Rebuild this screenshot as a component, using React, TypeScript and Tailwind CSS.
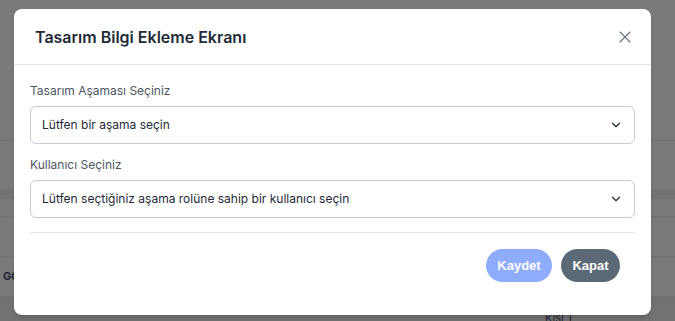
import { X, ChevronDown } from 'lucide-react';

function Select({ placeholder }: { placeholder: string }) {
  return (
    <div className="flex h-[38px] items-center justify-between rounded-md border border-[#c5ccd6] bg-white pl-[11px] pr-[11px]">
      <span className="text-[12px] text-[#1f2937] font-['Inter',sans-serif]">{placeholder}</span>
      <ChevronDown className="h-[14px] w-[14px] text-[#1f2937]" strokeWidth={2} />
    </div>
  );
}

export default function App() {
  return (
    <div className="relative h-[321px] w-full overflow-hidden bg-[#7a7a7a] font-['Inter',sans-serif]">
      {/* page under the overlay */}
      <div className="flex flex-col">
        <div className="h-[141px] border-b border-[#6f6f6f]" />
        <div className="h-[48px]" />
        <div className="h-[10px] bg-[#727272]" />
        <div className="h-[18px] border-b border-[#6f6f6f]" />
        <div className="h-[40px] border-b border-[#6f6f6f]" />
        <div className="flex h-[40px] items-center border-b border-[#6f6f6f] pl-[3px]">
          <span className="text-[11px] font-bold text-[#1e2430]">GÖ</span>
        </div>
        <div className="flex h-[24px] bg-[#727272] pl-[545px]">
          <span className="pt-[13px] text-[11px] text-[#1e2430]">Kişi T</span>
        </div>
      </div>

      {/* modal */}
      <div className="absolute left-[14px] top-[9px] flex h-[306px] w-[637px] flex-col rounded-lg bg-white shadow-md">
        <div className="flex h-[56px] items-center justify-between border-b border-[#e5e7eb] pl-[21px] pr-[16px]">
          <h2 className="text-[16px] font-semibold text-[#212a36]">Tasarım Bilgi Ekleme Ekranı</h2>
          <X className="h-[20px] w-[20px] text-[#6b7280]" strokeWidth={1.4} />
        </div>
        <div className="flex flex-col px-4 pt-[17px]">
          <label className="mb-[6px] text-[12px] text-[#4b5563]">Tasarım Aşaması Seçiniz</label>
          <Select placeholder="Lütfen bir aşama seçin" />
          <label className="mb-[6px] mt-[12px] text-[12px] text-[#4b5563]">Kullanıcı Seçiniz</label>
          <Select placeholder="Lütfen seçtiğiniz aşama rolüne sahip bir kullanıcı seçin" />
          <div className="mt-[14px] border-t border-[#e5e7eb]" />
          <div className="flex justify-end gap-[9px] pr-[15px] pt-[16px]">
            <button className="h-[33px] w-[66px] rounded-full bg-[#8eacfc] text-[13px] font-bold text-white font-['Liberation_Sans',sans-serif]">
              Kaydet
            </button>
            <button className="h-[33px] w-[59px] rounded-full bg-[#5b6976] text-[13px] font-bold text-white font-['Liberation_Sans',sans-serif]">
              Kapat
            </button>
          </div>
        </div>
      </div>
    </div>
  );
}
